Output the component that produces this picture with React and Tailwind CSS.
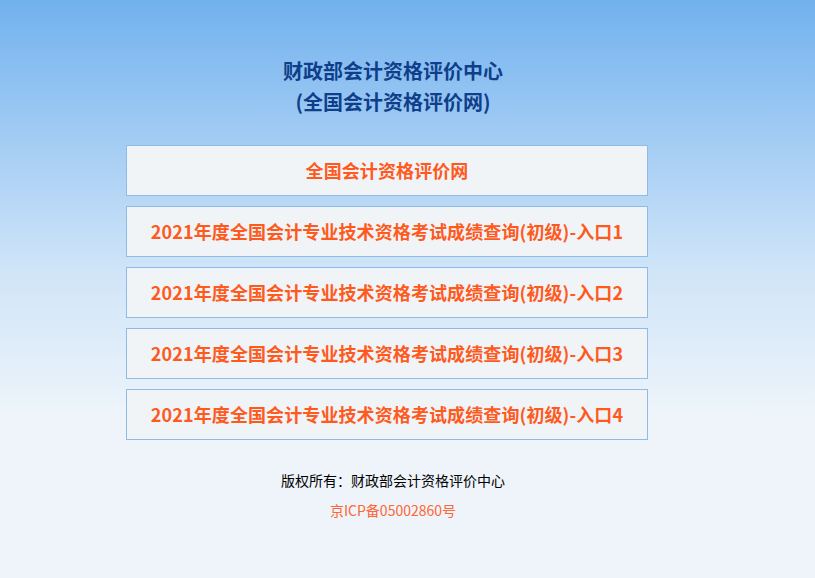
const LINKS = [
  "全国会计资格评价网",
  "2021年度全国会计专业技术资格考试成绩查询(初级)-入口1",
  "2021年度全国会计专业技术资格考试成绩查询(初级)-入口2",
  "2021年度全国会计专业技术资格考试成绩查询(初级)-入口3",
  "2021年度全国会计专业技术资格考试成绩查询(初级)-入口4",
];

function App() {
  return (
    <div
      className="min-h-screen bg-linear-to-b from-[#71b1ee] via-[#d0e5f8] via-47% to-[#eef4fa] to-72% font-['Noto_Sans_CJK_SC',sans-serif]"
    >
      <div className="ml-[126px] w-[534px] pt-[55px]">
        <h1 className="text-center text-[20px] font-bold leading-[31px] text-[#0f3f8b]">
          财政部会计资格评价中心
          <br />
          (全国会计资格评价网)
        </h1>

        <div className="mt-[28px] flex w-[522px] flex-col gap-[10px]">
          {LINKS.map((label) => (
            <a
              key={label}
              href="#"
              className="flex h-[51px] items-center justify-center border border-[#8fbbe9] bg-[#f0f4f7] text-[18px] font-bold tracking-[0.1px] text-[#ff5a1e]"
            >
              {label}
            </a>
          ))}
        </div>

        <div className="mt-[25px] text-center text-[14px] leading-[30px]">
          <p className="text-black">版权所有：财政部会计资格评价中心</p>
          <p className="text-[#ff6633]">京ICP备05002860号</p>
        </div>
      </div>
    </div>
  );
}

export default App;
